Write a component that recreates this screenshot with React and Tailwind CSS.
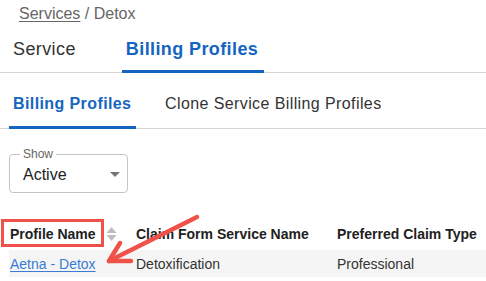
import React from "react";

export default function App() {
  const font = { fontFamily: '"Liberation Sans", Arial, sans-serif' };
  return (
    <div className="relative w-[486px] h-[281px] overflow-hidden bg-white" style={font}>
      {/* breadcrumb */}
      <div className="h-[26px] pt-[4px] pl-[19px] text-[16px] leading-[19px] text-[#666666]">
        <span className="underline decoration-[1px] underline-offset-[2px]">Services</span>
        <span> / Detox</span>
      </div>

      {/* main tabs */}
      <div className="flex h-[47px] border-b border-[#d4d4d4] pl-[9px] text-[18px] leading-[21px] tracking-[0.4px]">
        <div className="flex items-center px-[4px] text-[#333333]">Service</div>
        <div className="relative ml-[42px] flex w-[142px] items-center pl-[4px] font-bold text-[#1565c0]">
          Billing Profiles
          <div className="absolute left-0 right-0 -bottom-px h-[3px] bg-[#1565c0]" />
        </div>
      </div>

      {/* sub tabs */}
      <div className="mt-[6px] flex h-[50px] border-b border-[#d4d4d4] pl-[9px] text-[16px] leading-[19px] tracking-[0.4px]">
        <div className="relative flex w-[127px] items-center pl-[4px] font-bold text-[#1565c0]">
          Billing Profiles
          <div className="absolute left-0 right-0 -bottom-px h-[3px] bg-[#1565c0]" />
        </div>
        <div className="ml-[29px] flex items-center text-[#333333]">Clone Service Billing Profiles</div>
      </div>

      {/* select */}
      <div className="relative ml-[9px] mt-[25px] flex h-[39px] w-[119px] items-center rounded-[4px] border border-[#c4c4c4] pl-[13px]">
        <span className="absolute -top-[8px] left-[10px] bg-white px-[3px] text-[12px] leading-[14px] text-[#666666]">Show</span>
        <span className="pt-[1px] text-[16px] leading-[19px] text-[#222222]">Active</span>
        <svg className="absolute left-[93px] top-[7px]" width="24" height="24" viewBox="0 0 24 24">
          <path d="M7 10l5 5 5-5z" fill="#757575" />
        </svg>
      </div>

      {/* table */}
      <div className="mt-[25px] ml-[9px] text-[14px] leading-[16px]">
        <div className="grid h-[32px] grid-cols-[127px_201px_1fr] items-center font-bold text-[#212121]">
          <div className="relative flex items-center pl-[1px]">
            <span>Profile Name</span>
            <svg className="ml-[10px]" width="11" height="16" viewBox="0 0 11 16">
              <path d="M5.5 1 L10.5 7 L0.5 7 Z" fill="#bdbdbd" />
              <path d="M5.5 15 L10.5 9 L0.5 9 Z" fill="#bdbdbd" />
            </svg>
            <div className="absolute left-[-8px] top-[-7px] h-[28px] w-[103px] border-[3px] border-[#f0524a]" />
          </div>
          <div>Claim Form Service Name</div>
          <div>Preferred Claim Type</div>
        </div>
        <div className="grid h-[27px] grid-cols-[127px_201px_1fr] items-center bg-[#f5f5f5] text-[#333333]">
          <div className="pl-[1px]">
            <span className="text-[#3a7bd5] underline underline-offset-[2px]">Aetna - Detox</span>
          </div>
          <div>Detoxification</div>
          <div>Professional</div>
        </div>
      </div>

      {/* annotation arrow */}
      <svg className="absolute left-0 top-0 pointer-events-none" width="486" height="281" viewBox="0 0 486 281">
        <g stroke="#f0524a" strokeWidth="4.5" strokeLinecap="round" strokeLinejoin="round" fill="none">
          <path d="M197 217 L109 261" />
          <path d="M120 243 L109 261 L131 261" />
        </g>
      </svg>
    </div>
  );
}
